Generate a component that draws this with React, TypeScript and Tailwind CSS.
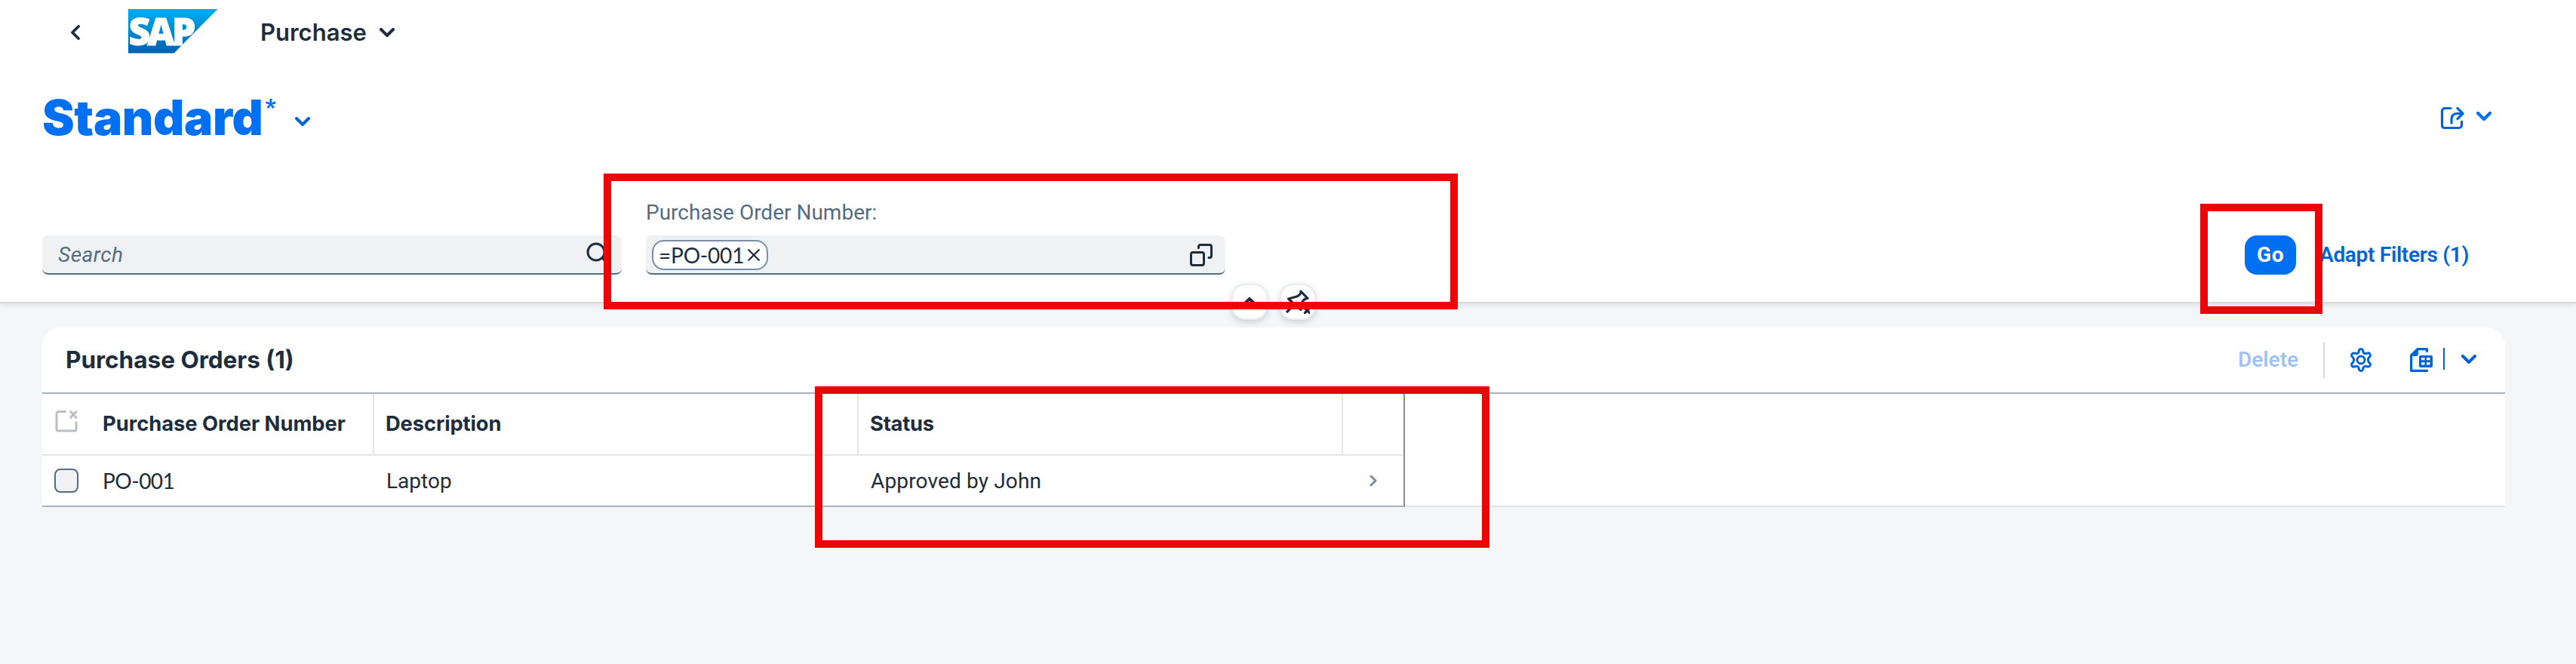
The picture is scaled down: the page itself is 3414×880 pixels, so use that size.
import React from "react";

function ChevronDown({ className, sw = 4 }: { className: string; sw?: number }) {
  return (
    <svg viewBox="0 0 20 12" className={"h-3 w-5 shrink-0 " + className} fill="none" stroke="currentColor" strokeWidth={sw} strokeLinecap="round" strokeLinejoin="round">
      <path d="M2 2l8 8 8-8" />
    </svg>
  );
}

function SapLogo() {
  return (
    <svg viewBox="0 0 118 59" className="mb-[3px] ml-16 h-[59px] w-[118px] shrink-0">
      <defs>
        <linearGradient id="sap" x1="0" y1="0" x2="0" y2="1">
          <stop offset="0" stopColor="#00aeef" />
          <stop offset="0.35" stopColor="#0092d8" />
          <stop offset="1" stopColor="#0061b4" />
        </linearGradient>
      </defs>
      <path d="M0 0h118.500L60.500 58.500H0z" fill="url(#sap)" />
      <text x="0.500" y="47.500" fontFamily='"Open Sans", sans-serif' fontWeight="800" fontSize="50" letterSpacing="-4" fill="#fff" stroke="#fff" strokeWidth="1">
        SAP
      </text>
    </svg>
  );
}

function Frame({ className }: { className: string }) {
  return <div className={"pointer-events-none absolute border-10 border-[#eb0707] " + className} />;
}

export default function App() {
  return (
    <div className="relative flex h-[880px] w-[3414px] flex-col overflow-hidden bg-[#f5f6f7] font-['Roboto',sans-serif] text-[28px] leading-9 text-[#1d2d3e]">
      <header className="relative flex h-[402px] shrink-0 flex-col border-b-2 border-[#d9d9d9] bg-white shadow-[0_2px_8px_rgba(34,53,72,0.12)]">
        <div className="flex h-[86px] items-center pl-[94px]">
          <svg viewBox="0 0 12 20" className="h-5 w-3 shrink-0" fill="none" stroke="currentColor" strokeWidth="3.800" strokeLinecap="round" strokeLinejoin="round">
            <path d="M10 2l-8 8 8 8" />
          </svg>
          <SapLogo />
          <span className="ml-[57px] w-[158px] font-['Inter',sans-serif] text-[31px] font-semibold">Purchase</span>
          <ChevronDown className="" />
        </div>

        <div className="flex h-[140px] items-center justify-between pr-[112px] pl-14">
          <div className="flex items-center text-[#0070f2]">
            <h1 className="font-['Inter',sans-serif] text-[64px] font-black tracking-[-0.300px]">Standard</h1>
            <span className="mb-[28px] ml-[3px] w-10 text-[30px] font-black">*</span>
            <ChevronDown className="mt-[10px] text-[#0064d9]" />
          </div>
          <div className="flex items-center gap-4 text-[#0064d9]">
            <svg viewBox="0 0 32 32" className="h-8 w-8" fill="none" stroke="currentColor" strokeWidth="3.200" strokeLinecap="round" strokeLinejoin="round">
              <path d="M14 3.500H6A3.500 3.500 0 0 0 2.500 7v19.500A3.500 3.500 0 0 0 6 29.500h19a3.500 3.500 0 0 0 3.500-3.500v-5" />
              <path d="M15 23v-5.500c0-4 3-7 7-7h7M23 3.500l7 7-7 7" />
            </svg>
            <ChevronDown className="mb-1 text-[#0070f2]" sw={4.200} />
          </div>
        </div>

        <div className="flex h-[138px] items-end pl-14">
          <div className="flex h-[52px] w-[768px] items-center justify-between rounded-lg border-b-2 border-[#556b82] bg-[#eff1f2] pr-[15px] pl-[21px]">
            <span className="mt-px tracking-[0.500px] text-[#556b82] italic">Search</span>
            <svg viewBox="0 0 32 32" className="h-8 w-8" fill="none" stroke="currentColor" strokeWidth="3" strokeLinecap="round">
              <circle cx="13" cy="13" r="11" />
              <path d="M21 21l8 8" />
            </svg>
          </div>

          <div className="ml-8 flex w-[768px] flex-col gap-3">
            <label className="text-[#556b82]">Purchase Order Number:</label>
            <div className="flex h-[52px] items-center justify-between rounded-lg border-b-2 border-[#556b82] bg-[#eff1f2] pr-4 pl-2">
              <div className="mt-0.5 flex h-10 w-[154px] items-center gap-[5px] rounded-2xl border-2 border-[#788fa6] bg-white pl-[7px] font-['Lato',sans-serif]">
                <span className="w-[113px] shrink-0 tracking-[-0.200px] whitespace-nowrap">=PO-001</span>
                <svg viewBox="0 0 16 16" className="h-4 w-4 shrink-0" fill="none" stroke="currentColor" strokeWidth="2.200" strokeLinecap="round">
                  <path d="M1.200 1.200l13.600 13.600M14.800 1.200L1.200 14.800" />
                </svg>
              </div>
              <svg viewBox="0 0 32 32" className="mt-0.5 h-8 w-8" fill="none" stroke="currentColor" strokeWidth="3" strokeLinecap="round" strokeLinejoin="round">
                <rect x="2.500" y="12.500" width="17" height="17" rx="2.500" />
                <path d="M12.500 6.500V5a2.500 2.500 0 0 1 2.500-2.500h12A2.500 2.500 0 0 1 29.500 5v12a2.500 2.500 0 0 1-2.500 2.500h-1" />
              </svg>
            </div>
          </div>

          <button className="ml-[1351px] h-[52px] w-[68px] rounded-2xl bg-[#0070f2] text-center font-bold tracking-[0.500px] text-white">Go</button>
          <button className="ml-[31px] h-[52px] font-semibold tracking-[-0.300px] whitespace-nowrap text-[#0064d9]">Adapt Filters (1)</button>
        </div>

        <div className="absolute top-[376px] left-[1632px] flex gap-4">
          <button className="flex h-12 w-12 items-center justify-center rounded-[18px] border-2 border-[#ebecee] bg-white shadow-[0_3px_8px_rgba(34,53,72,0.2)]">
            <svg viewBox="0 0 20 12" className="h-3 w-5" fill="none" stroke="currentColor" strokeWidth="4" strokeLinecap="round" strokeLinejoin="round">
              <path d="M2 10l8-8 8 8" />
            </svg>
          </button>
          <button className="flex h-12 w-12 items-center justify-center rounded-[18px] border-2 border-[#ebecee] bg-white shadow-[0_3px_8px_rgba(34,53,72,0.2)]">
            <svg viewBox="0 0 32 32" className="h-8 w-8" fill="none" stroke="currentColor" strokeWidth="3.200" strokeLinecap="round" strokeLinejoin="round">
              <path d="M20 2l9 9.500c-2.500-.5-4 1-6 3l-2.500 4-.5 8L3.500 12l11-3c2.500-1 6-3 5.500-7zM10 21l-8 8M25.500 24.500l6 6M31.500 24.500l-6 6" />
            </svg>
          </button>
        </div>
      </header>

      <main className="mt-8 ml-14 flex w-[3264px] flex-col rounded-t-3xl border-b-2 border-[#e5e5e5] bg-white">
        <div className="flex h-[88px] items-center rounded-t-3xl border-b-2 border-[#a8b3bf] pr-[38px] pl-[31px]">
          <h2 className="flex-1 font-['Inter',sans-serif] text-[31.500px] font-bold">Purchase Orders (1)</h2>
          <span className="w-[113px] font-semibold text-[#0064d9]/40">Delete</span>
          <div className="h-12 w-0.5 bg-[#d9d9d9]" />
          <div className="ml-8 flex items-center text-[#0064d9]">
            <svg viewBox="0 0 32 32" className="h-8 w-8" fill="none" stroke="currentColor" strokeWidth="3" strokeLinejoin="round">
              <path d="M13.500 3.500Q14 1.500 16 1.500T18.500 3.500L19.200 6Q20.200 8 22.500 7.600L25 7Q27 6.500 28 8.300T27.800 11.500L26 13.500Q24.800 16 26 18.500L27.800 20.500Q29 22 28 23.700T25 25L22.500 24.400Q20.200 24 19.200 26L18.500 28.500Q18 30.500 16 30.500T13.500 28.500L12.800 26Q11.800 24 9.500 24.400L7 25Q5 25.500 4 23.700T4.200 20.500L6 18.500Q7.200 16 6 13.500L4.200 11.500Q3 10 4 8.300T7 7L9.500 7.600Q11.800 8 12.800 6z" />
              <circle cx="16" cy="16" r="5" />
            </svg>
            <svg viewBox="0 0 32 32" className="ml-[48px] h-8 w-8" fill="none" stroke="currentColor" strokeWidth="3.200" strokeLinecap="round" strokeLinejoin="round">
              <path d="M23.500 4.500V1.600H11L2.600 10v20.400h21" />
              <path d="M11.500 1.500v6.500a2.500 2.500 0 0 1-2.500 2.500H2z" fill="currentColor" strokeWidth="1" />
              <rect x="13" y="10" width="18" height="16" rx="2" fill="currentColor" stroke="none" />
              <path d="M16 13h4.500v3.200H16zM23 13h4.500v3.200H23zM16 19.300h4.500v3.200H16zM23 19.300h4.500v3.200H23z" fill="#fff" stroke="none" />
            </svg>
            <div className="mb-[3px] ml-[13px] h-[29px] w-0.5 bg-[#0064d9]" />
            <ChevronDown className="mb-0.5 ml-[22px]" />
          </div>
        </div>

        <div className="grid w-[1806px] grid-cols-[80px_360px_642px_642px_80px] border-r-2 border-[#8c8c8c] font-['Inter',sans-serif] text-[27.300px] font-bold">
          <div className="flex h-[82px] items-center border-b-2 border-[#e5e5e5] pl-[17px]">
            <svg viewBox="0 0 30 30" className="mb-[8px] h-[30px] w-[30px] text-[#bbbfc4]" fill="none" stroke="currentColor" strokeWidth="3" strokeLinecap="round" strokeLinejoin="round">
              <path d="M13.500 2.500H5A3 3 0 0 0 2 5.500v20a2.500 2.500 0 0 0 2.500 2.500h21a2.500 2.500 0 0 0 2.500-2.500V17M20.500 2.500l7.500 8M28 2.500l-7.500 8" />
            </svg>
          </div>
          <div className="flex items-center border-r-2 border-b-2 border-[#e5e5e5]">Purchase Order Number</div>
          <div className="flex items-center border-r-2 border-b-2 border-[#e5e5e5] pl-[15px] tracking-[-0.100px]">Description</div>
          <div className="flex items-center border-r-2 border-b-2 border-[#e5e5e5] pl-[15px] tracking-[-0.200px]">Status</div>
          <div className="border-b-2 border-[#e5e5e5]" />
        </div>

        <div className="-mb-0.5 grid h-[68px] w-[1806px] grid-cols-[80px_360px_642px_642px_80px] items-center border-r-2 border-b-2 border-r-[#8c8c8c] border-b-[#a8b3bf]">
          <div className="ml-4 h-8 w-8 rounded-lg border-2 border-[#556b82] bg-[#eff1f2]" />
          <div className="font-['Lato',sans-serif] tracking-[-0.500px]">PO-001</div>
          <div className="mt-px pl-4">Laptop</div>
          <div className="mt-px pl-4 tracking-[0.150px]">Approved by John</div>
          <svg viewBox="0 0 10 16" className="ml-[35px] h-4 w-2.5 text-[#788fa6]" fill="none" stroke="currentColor" strokeWidth="3" strokeLinecap="round" strokeLinejoin="round">
            <path d="M2 2l6 6-6 6" />
          </svg>
        </div>
      </main>

      <Frame className="top-[230px] left-[800px] h-[180px] w-[1132px]" />
      <Frame className="top-[270px] left-[2916px] h-[146px] w-[162px]" />
      <Frame className="top-[512px] left-[1080px] h-[214px] w-[894px]" />
    </div>
  );
}
